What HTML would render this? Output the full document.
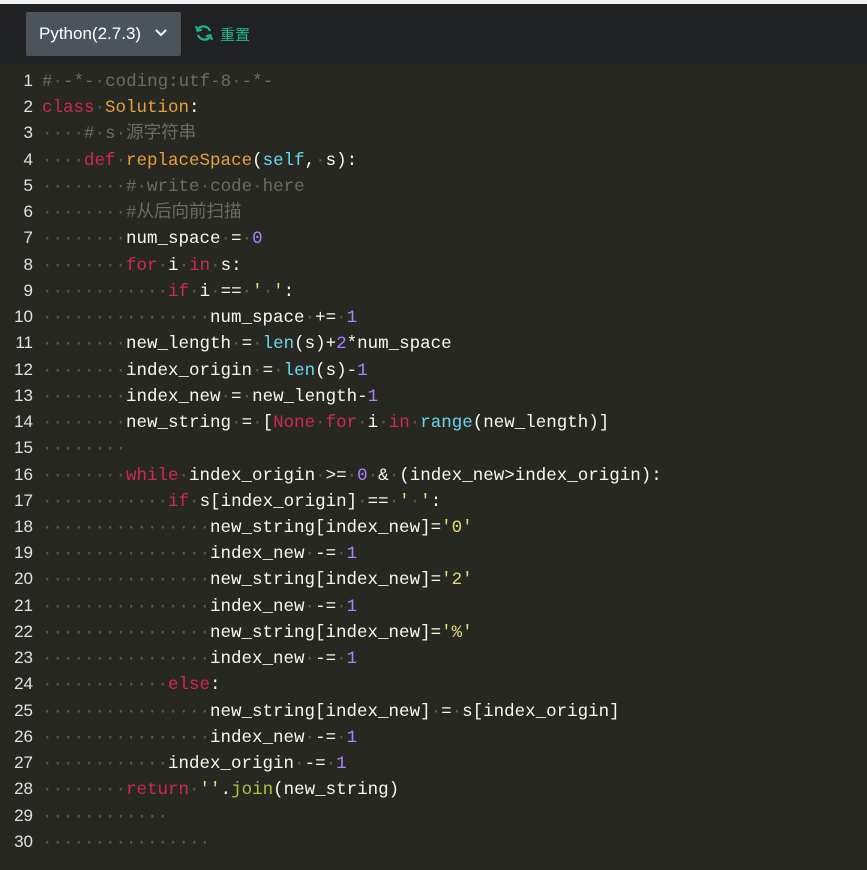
<!DOCTYPE html>
<html><head><meta charset="utf-8"><style>
html,body{margin:0;padding:0;width:867px;height:870px;overflow:hidden;background:#272822;}
.top{position:absolute;left:0;top:0;width:867px;height:4px;background:#f3f3f3;}
.bar{position:absolute;left:0;top:4px;width:867px;height:60px;background:#1f2123;}
.sel{position:absolute;left:26px;top:8px;width:155px;height:44px;background:#4b545c;border-radius:2px;color:#fff;font:17px "Liberation Sans",sans-serif;line-height:44px;box-sizing:border-box;padding-left:13px;}
.sel svg{position:absolute;left:128px;top:16px;}
.reset{position:absolute;left:194px;top:19px;color:#1fb58a;font:15px "Liberation Sans","Noto Sans CJK SC",sans-serif;}
.reset span{position:absolute;left:26px;top:1px;white-space:nowrap;}
.ed{position:absolute;left:0;top:68px;font-family:"Liberation Mono",monospace;font-size:17.5px;color:#f8f8f2;white-space:pre;}
.ed div{height:26.24px;line-height:26px;overflow:visible;}
.ln{display:inline-block;width:33px;text-align:right;padding-right:9px;color:#e0e0e0;font-family:"Liberation Sans",sans-serif;font-size:17px;}
.d{color:#5a5a50}.c{color:#6f6b5e}.k{color:#d1265a}.f{color:#e6a23c}.b{color:#66d9ef}.n{color:#ae81ff}.s{color:#e6db74}.g{color:#a6c83a}.cj{font-family:"Liberation Mono","Noto Sans CJK SC",monospace;line-height:20px}
</style></head><body>
<div class="top"></div>
<div class="bar">
<div class="sel">Python(2.7.3)<svg width="14" height="10" viewBox="0 0 14 10"><path d="M2 2 L7 7 L12 2" stroke="#fff" stroke-width="2" fill="none"/></svg></div>
<div class="reset"><svg width="20" height="20" viewBox="0 0 20 20"><path d="M16 8 A7 7 0 0 0 4 6" stroke="#1fb58a" stroke-width="2.2" fill="none"/><path d="M2 3 L3.5 8 L8 6.5" stroke="#1fb58a" stroke-width="2" fill="none"/><path d="M4 12 A7 7 0 0 0 16 14" stroke="#1fb58a" stroke-width="2.2" fill="none"/><path d="M18 17 L16.5 12 L12 13.5" stroke="#1fb58a" stroke-width="2" fill="none"/></svg><span>重置</span></div>
</div>
<div class="ed"><div><span class="ln">1</span><span class="c">#<span class="d">·</span>-*-<span class="d">·</span>coding:utf-8<span class="d">·</span>-*-</span></div><div><span class="ln">2</span><span class="k">class</span><span class="d">·</span><span class="f">Solution</span>:</div><div><span class="ln">3</span><span class="d">····</span><span class="c cj">#<span class="d">·</span>s<span class="d">·</span>源字符串</span></div><div><span class="ln">4</span><span class="d">····</span><span class="k">def</span><span class="d">·</span><span class="f">replaceSpace</span>(<span class="b">self</span>,<span class="d">·</span>s):</div><div><span class="ln">5</span><span class="d">········</span><span class="c">#<span class="d">·</span>write<span class="d">·</span>code<span class="d">·</span>here</span></div><div><span class="ln">6</span><span class="d">········</span><span class="c cj">#从后向前扫描</span></div><div><span class="ln">7</span><span class="d">········</span>num_space<span class="d">·</span>=<span class="d">·</span><span class="n">0</span></div><div><span class="ln">8</span><span class="d">········</span><span class="k">for</span><span class="d">·</span>i<span class="d">·</span><span class="k">in</span><span class="d">·</span>s:</div><div><span class="ln">9</span><span class="d">············</span><span class="k">if</span><span class="d">·</span>i<span class="d">·</span>==<span class="d">·</span><span class="s">'<span class="d">·</span>'</span>:</div><div><span class="ln">10</span><span class="d">················</span>num_space<span class="d">·</span>+=<span class="d">·</span><span class="n">1</span></div><div><span class="ln">11</span><span class="d">········</span>new_length<span class="d">·</span>=<span class="d">·</span><span class="b">len</span>(s)+<span class="n">2</span>*num_space</div><div><span class="ln">12</span><span class="d">········</span>index_origin<span class="d">·</span>=<span class="d">·</span><span class="b">len</span>(s)-<span class="n">1</span></div><div><span class="ln">13</span><span class="d">········</span>index_new<span class="d">·</span>=<span class="d">·</span>new_length-<span class="n">1</span></div><div><span class="ln">14</span><span class="d">········</span>new_string<span class="d">·</span>=<span class="d">·</span>[<span class="k">None</span><span class="d">·</span><span class="k">for</span><span class="d">·</span>i<span class="d">·</span><span class="k">in</span><span class="d">·</span><span class="b">range</span>(new_length)]</div><div><span class="ln">15</span><span class="d">········</span></div><div><span class="ln">16</span><span class="d">········</span><span class="k">while</span><span class="d">·</span>index_origin<span class="d">·</span>&gt;=<span class="d">·</span><span class="n">0</span><span class="d">·</span>&amp;<span class="d">·</span>(index_new&gt;index_origin):</div><div><span class="ln">17</span><span class="d">············</span><span class="k">if</span><span class="d">·</span>s[index_origin]<span class="d">·</span>==<span class="d">·</span><span class="s">'<span class="d">·</span>'</span>:</div><div><span class="ln">18</span><span class="d">················</span>new_string[index_new]=<span class="s">'0'</span></div><div><span class="ln">19</span><span class="d">················</span>index_new<span class="d">·</span>-=<span class="d">·</span><span class="n">1</span></div><div><span class="ln">20</span><span class="d">················</span>new_string[index_new]=<span class="s">'2'</span></div><div><span class="ln">21</span><span class="d">················</span>index_new<span class="d">·</span>-=<span class="d">·</span><span class="n">1</span></div><div><span class="ln">22</span><span class="d">················</span>new_string[index_new]=<span class="s">'%'</span></div><div><span class="ln">23</span><span class="d">················</span>index_new<span class="d">·</span>-=<span class="d">·</span><span class="n">1</span></div><div><span class="ln">24</span><span class="d">············</span><span class="k">else</span>:</div><div><span class="ln">25</span><span class="d">················</span>new_string[index_new]<span class="d">·</span>=<span class="d">·</span>s[index_origin]</div><div><span class="ln">26</span><span class="d">················</span>index_new<span class="d">·</span>-=<span class="d">·</span><span class="n">1</span></div><div><span class="ln">27</span><span class="d">············</span>index_origin<span class="d">·</span>-=<span class="d">·</span><span class="n">1</span></div><div><span class="ln">28</span><span class="d">········</span><span class="k">return</span><span class="d">·</span><span class="s">''</span>.<span class="g">join</span>(new_string)</div><div><span class="ln">29</span><span class="d">············</span></div><div><span class="ln">30</span><span class="d">················</span></div></div>
</body></html>
